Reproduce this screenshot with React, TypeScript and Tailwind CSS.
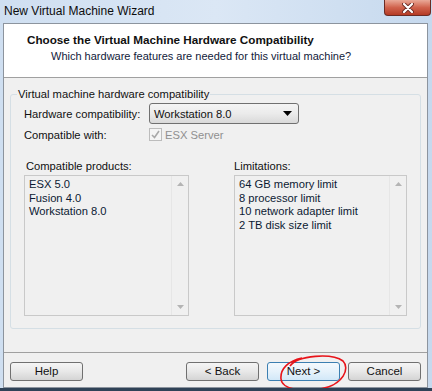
const ui = { fontFamily: '"Liberation Sans", Arial, sans-serif' };

function ListBox({ items, width }: { items: string[]; width: string }) {
  return (
    <div className={`${width} h-[141px] border border-[#c9c9c9] bg-[#f0f0f0] flex`}>
      <div className="flex-1 pl-[4px] pt-[2px] text-[11.2px] leading-[13.5px] text-[#0c1a33]">
        {items.map((item) => (
          <div key={item}>{item}</div>
        ))}
      </div>
      <div className="w-[17px] border-l border-[#e6e6e6] flex flex-col justify-between items-center py-[6px]">
        <svg width="7" height="4" viewBox="0 0 7 4">
          <path d="M0 4 L3.5 0 L7 4 Z" fill="#b4b4b4" />
        </svg>
        <svg width="7" height="4" viewBox="0 0 7 4">
          <path d="M0 0 L3.5 4 L7 0 Z" fill="#b4b4b4" />
        </svg>
      </div>
    </div>
  );
}

function Button({ label, primary }: { label: string; primary?: boolean }) {
  return (
    <div
      className={`w-[73px] h-[19px] rounded-[3px] border flex items-center justify-center text-[11.5px] text-[#111] ${
        primary
          ? "border-[#3c7fb1] bg-gradient-to-b from-[#f4f9fd] via-[#e6f2fb] to-[#d2e8f8]"
          : "border-[#707070] bg-gradient-to-b from-[#f5f5f5] via-[#e8e8e8] to-[#d4d4d4]"
      }`}
    >
      {label}
    </div>
  );
}

export default function App() {
  return (
    <div
      className="relative w-[432px] h-[391px] overflow-hidden bg-gradient-to-r from-[#cfdff1] via-[#dbe7f5] to-[#c6d9ee] border-b-[3px] border-[#2f4257]"
      style={ui}
    >
      {/* title bar */}
      <div className="h-[23px] flex justify-between items-start">
        <div className="pl-[4px] pt-[3px] text-[12px] leading-[16px] text-[#0d0d0d]">New Virtual Machine Wizard</div>
        <div className="mr-[1px] w-[47px] h-[16px] rounded-b-[4px] border border-t-0 border-[#6b2b24] bg-gradient-to-b from-[#e9a998] via-[#d0624c] to-[#b43a24] flex items-center justify-center">
          <svg width="12" height="10" viewBox="0 0 12 10">
            <path d="M2 1 L10 9 M10 1 L2 9" stroke="#6b2b24" strokeWidth="4" strokeLinecap="round" />
            <path d="M2 1 L10 9 M10 1 L2 9" stroke="#ffffff" strokeWidth="2.2" strokeLinecap="round" />
          </svg>
        </div>
      </div>

      {/* client */}
      <div className="ml-[3px] w-[425px] h-[365px] border border-[#8c949e] bg-[#f0f0f0] flex flex-col">
        <div className="h-[54px] bg-white border-b border-[#a0a0a0] pt-[8px] leading-[16px]">
          <div className="pl-[23px] font-bold text-[11.7px] text-[#111]">Choose the Virtual Machine Hardware Compatibility</div>
          <div className="pl-[47px] text-[11px] text-[#111a3a]">Which hardware features are needed for this virtual machine?</div>
        </div>

        <div className="flex-1 pt-[16px] pl-[6px]">
          <div className="relative w-[411px] h-[235px] border border-[#d5dfe5] rounded-[3px] text-[11.2px] leading-[16px] text-[#111]">
            <span className="absolute -top-[9px] left-[6px] px-[1px] bg-[#f0f0f0]">
              Virtual machine hardware compatibility
            </span>
            <div className="pt-[8px] pl-[13px] flex items-center">
              <div className="w-[125px]">Hardware compatibility:</div>
              <div className="w-[150px] h-[21px] rounded-[3px] border border-[#707070] bg-gradient-to-b from-[#f4f4f4] via-[#ebebeb] to-[#d9d9d9] flex items-center justify-between pl-[4px] pr-[6px]">
                <span>Workstation 8.0</span>
                <svg width="9" height="5" viewBox="0 0 9 5">
                  <path d="M0 0 L9 0 L4.5 5 Z" fill="#000" />
                </svg>
              </div>
            </div>
            <div className="mt-[4px] pl-[13px] flex items-center h-[13px]">
              <div className="w-[125px]">Compatible with:</div>
              <div className="w-[13px] h-[13px] border border-[#bcbcbc] bg-[#f4f4f4] flex items-center justify-center">
                <svg width="9" height="9" viewBox="0 0 9 9">
                  <path d="M1 5 L3.5 7.5 L8 1" stroke="#a8a8a8" strokeWidth="1.6" fill="none" />
                </svg>
              </div>
              <span className="ml-[3px] text-[#8f8f8f]">ESX Server</span>
            </div>
            <div className="mt-[17px] pl-[13px] flex gap-[45px]">
              <div>
                <div className="pl-[2px] mb-[1px]">Compatible products:</div>
                <ListBox width="w-[165px]" items={["ESX 5.0", "Fusion 4.0", "Workstation 8.0"]} />
              </div>
              <div>
                <div className="mb-[1px]">Limitations:</div>
                <ListBox
                  width="w-[173px]"
                  items={["64 GB memory limit", "8 processor limit", "10 network adapter limit", "2 TB disk size limit"]}
                />
              </div>
            </div>
          </div>
        </div>

        <div className="h-[35px] border-t border-[#a0a0a0] pt-[9px] pl-[6px] pr-[6px] flex">
          <Button label="Help" />
          <div className="flex-1" />
          <div className="flex gap-[8px]">
            <Button label="< Back" />
            <Button label="Next >" primary />
            <Button label="Cancel" />
          </div>
        </div>
      </div>

      {/* hand-drawn annotation */}
      <svg className="absolute left-0 top-0 pointer-events-none" width="432" height="391" viewBox="0 0 432 391">
        <path
          d="M290 366 C298 355 332 353 343 361 C350 368 344 385 320 389 C300 392 282 389 281 379 C280 369 288 361 302 358"
          stroke="#e8141a"
          strokeWidth="1.6"
          fill="none"
        />
      </svg>
    </div>
  );
}
